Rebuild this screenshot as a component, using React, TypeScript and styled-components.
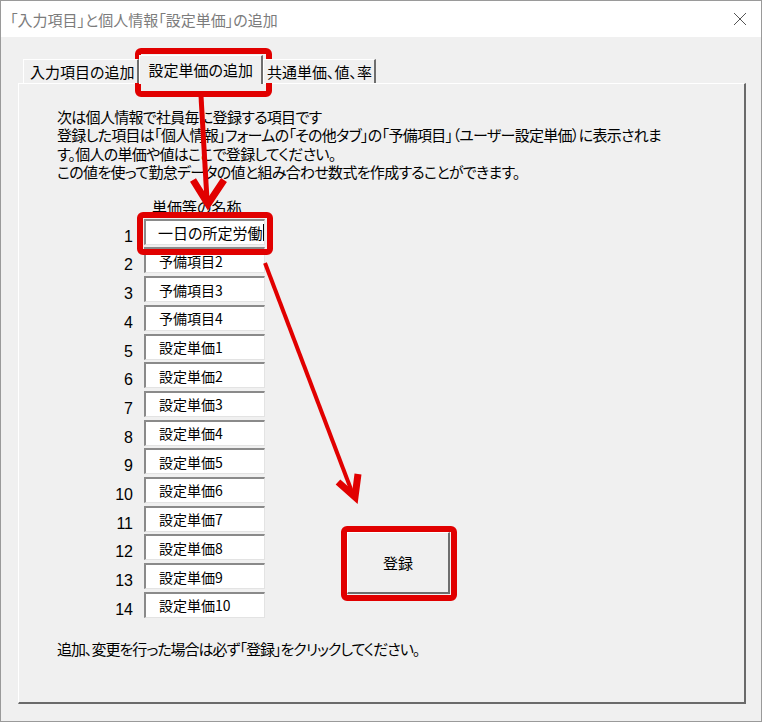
import styled, { createGlobalStyle } from "styled-components";

const GlobalStyle = createGlobalStyle`
  html, body {
    margin: 0;
    padding: 0;
    background: #f0f0f0;
  }
  body {
    font-family: "Noto Sans CJK JP", "Noto Sans", sans-serif;
    font-feature-settings: "palt";
    color: #000;
  }
`;

const Window = styled.div`
  position: relative;
  box-sizing: border-box;
  width: 762px;
  height: 722px;
  border: 1px solid #9a9a9a;
  background: #f0f0f0;
  overflow: hidden;
`;

const TitleBar = styled.div`
  display: flex;
  align-items: center;
  justify-content: space-between;
  height: 36px;
  padding: 0 14px 0 9px;
  background: #fff;
`;

const Title = styled.span`
  font-size: 15px;
  color: #7c7c7c;
  line-height: 1;
  margin-top: 1px;
`;

const Body = styled.div`
  padding: 15px 0 0 17px;
`;

const TabStrip = styled.div`
  display: flex;
  align-items: flex-end;
  height: 31px;
  padding-left: 5px;
`;

const Tab = styled.div<{ $active?: boolean; $pad?: string }>`
  position: relative;
  z-index: ${(p) => (p.$active ? 2 : 1)};
  box-sizing: border-box;
  display: flex;
  align-items: ${(p) => (p.$active ? "flex-start" : "center")};
  height: ${(p) => (p.$active ? "29px" : "24px")};
  margin: ${(p) => (p.$active ? "0 0 -1px 0" : "0")};
  padding: ${(p) => p.$pad};
  background: #f0f0f0;
  border-top: 1px solid #fff;
  border-left: 1px solid #fff;
  border-right: 2px solid #6e6e6e;
  font-size: 15px;
  line-height: 18px;
  white-space: nowrap;
`;

const Panel = styled.div`
  box-sizing: border-box;
  width: 728px;
  height: 621px;
  border-top: 1px solid #fff;
  border-left: 1px solid #fff;
  border-right: 2px solid #6a6a6a;
  border-bottom: 2px solid #6a6a6a;
  padding: 24px 0 0 38px;
`;

const Intro = styled.div`
  font-size: 15px;
  line-height: 18.3px;
  letter-spacing: -0.7px;
  white-space: nowrap;
`;

const ContentRow = styled.div`
  display: flex;
  margin-top: 17px;
`;

const ListColumn = styled.div`
  display: flex;
  flex-direction: column;
`;

const Header = styled.div`
  font-size: 15px;
  line-height: 18px;
  margin-left: 95px;
  margin-bottom: 2.6px;
`;

const Rows = styled.div`
  display: flex;
  flex-direction: column;
  gap: 2.7px;
`;

const Row = styled.div`
  display: flex;
  height: 26px;
  gap: 11px;
`;

const RowNumber = styled.span`
  display: flex;
  align-items: flex-end;
  justify-content: flex-end;
  width: 76px;
  font-family: "Liberation Sans", "Noto Sans", sans-serif;
  font-size: 16px;
  line-height: 1;
`;

const TextBox = styled.div<{ $focused?: boolean }>`
  box-sizing: border-box;
  display: flex;
  align-items: center;
  width: 121px;
  height: 26px;
  padding-left: ${(p) => (p.$focused ? "12px" : "13px")};
  background: #fff;
  border-top: 2px solid #8a8a8a;
  border-left: 2px solid #8a8a8a;
  border-right: 1px solid #e3e3e3;
  border-bottom: 1px solid #e3e3e3;
  font-size: ${(p) => (p.$focused ? "15px" : "14px")};
  line-height: 1;
  white-space: nowrap;
  overflow: hidden;
`;

const Caret = styled.span`
  display: inline-block;
  width: 1px;
  height: 17px;
  margin-left: 1px;
  background: #000;
`;

const Button = styled.div`
  box-sizing: border-box;
  display: flex;
  align-items: center;
  justify-content: center;
  width: 103px;
  height: 62px;
  margin: 0 0 24px 82px;
  align-self: flex-end;
  background: #f0f0f0;
  border-top: 1px solid #fff;
  border-left: 1px solid #fff;
  border-right: 2px solid #6e6e6e;
  border-bottom: 2px solid #6e6e6e;
  font-size: 15px;
`;

const Note = styled.div`
  margin-top: 22px;
  font-size: 15px;
  line-height: 18px;
  letter-spacing: -1px;
`;

const Overlay = styled.svg`
  position: absolute;
  left: -1px;
  top: -1px;
  pointer-events: none;
`;

const names = [
  "一日の所定労働",
  "予備項目2",
  "予備項目3",
  "予備項目4",
  "設定単価1",
  "設定単価2",
  "設定単価3",
  "設定単価4",
  "設定単価5",
  "設定単価6",
  "設定単価7",
  "設定単価8",
  "設定単価9",
  "設定単価10",
];

const RED = "#e10000";

const Annotations = () => (
  <Overlay width={762} height={722} viewBox="0 0 762 722">
    <g fill="none" stroke={RED} strokeWidth={6}>
      <rect x={138} y={51} width={131} height={43} rx={3} />
      <rect x={140} y={215} width={130} height={37} rx={3} />
      <rect x={344} y={529} width={110} height={69} rx={3} />
    </g>
    <g fill="none" stroke={RED} strokeLinecap="butt" strokeLinejoin="miter">
      <line x1={201} y1={96} x2={207} y2={200} strokeWidth={5} />
      <polyline points="193,180 208,204 224,180" strokeWidth={7} />
      <line x1={265} y1={263} x2={352} y2={492} strokeWidth={4} />
      <polyline points="338,482 355,497 358,474" strokeWidth={7} />
    </g>
  </Overlay>
);

const CloseIcon = () => (
  <svg width={14} height={14} viewBox="0 0 14 14">
    <path d="M1 1 L13 13 M13 1 L1 13" stroke="#555" strokeWidth={1} fill="none" />
  </svg>
);

export default function App() {
  return (
    <>
      <GlobalStyle />
      <Window>
        <TitleBar>
          <Title>「入力項目」と個人情報「設定単価」の追加</Title>
          <CloseIcon />
        </TitleBar>
        <Body>
          <TabStrip>
            <Tab $pad="0 3px 0 6px">入力項目の追加</Tab>
            <Tab $active $pad="5px 8px 0 8px">
              設定単価の追加
            </Tab>
            <Tab $pad="0 2px 0 3px">共通単価、値、率</Tab>
          </TabStrip>
          <Panel>
            <Intro>
              次は個人情報で社員毎に登録する項目です
              <br />
              登録した項目は「個人情報」フォームの「その他タブ」の「予備項目」（ユーザー設定単価）に表示されま
              <br />
              す。個人の単価や値はここで登録してください。
              <br />
              この値を使って勤怠データの値と組み合わせ数式を作成することができます。
            </Intro>
            <ContentRow>
              <ListColumn>
                <Header>単価等の名称</Header>
                <Rows>
                  {names.map((name, i) => (
                    <Row key={name}>
                      <RowNumber>{i + 1}</RowNumber>
                      <TextBox $focused={i === 0}>
                        {name}
                        {i === 0 && <Caret />}
                      </TextBox>
                    </Row>
                  ))}
                </Rows>
              </ListColumn>
              <Button>登録</Button>
            </ContentRow>
            <Note>追加、変更を行った場合は必ず「登録」をクリックしてください。</Note>
          </Panel>
        </Body>
        <Annotations />
      </Window>
    </>
  );
}
